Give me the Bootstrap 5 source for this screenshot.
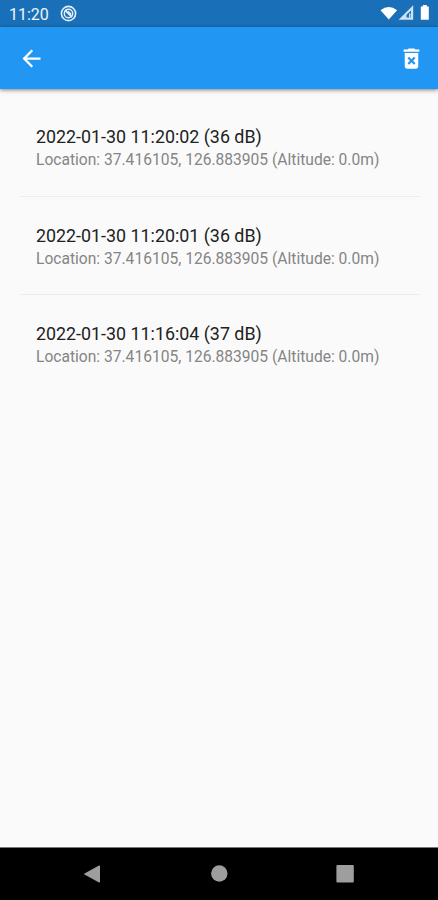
<!DOCTYPE html>
<html lang="en">
<head>
<meta charset="utf-8">
<meta name="viewport" content="width=device-width, initial-scale=1">
<title>Records</title>
<link href="https://cdn.jsdelivr.net/npm/bootstrap@5.3.0/dist/css/bootstrap.min.css" rel="stylesheet">
<style>
body { font-family: Roboto, "Liberation Sans", sans-serif; background: #fafafa; height: 900px; overflow: hidden; }
svg { display: block; flex: none; }
.status-bar { height: 27px; background: #1a70b8; color: #eef5fb; font-size: 16px; line-height: 27px; padding: 1px 7px 0 9px; }
.app-bar { height: 62px; background: #2196f3; padding: 0 13px 0 18px; box-shadow: 0 1px 4px rgba(0,0,0,.5); }
.records { padding: 8px 18px 0 20px; }
.record { height: 98px; padding: 27px 16px 0; border-bottom: 1px solid #ededed; }
.record:first-child { height: 100px; padding-top: 28px; }
.record:last-child { border-bottom: 0; }
.record-title { font-size: 17.85px; line-height: 23px; color: #212121; }
.record-place { font-size: 15.6px; line-height: 25px; color: #858585; }
.system-nav { height: 53px; background: #000; border-top: 1px solid #777; }
.system-nav svg { width: 126px; }
</style>
<script src="https://cdn.jsdelivr.net/npm/bootstrap@5.3.0/dist/js/bootstrap.bundle.min.js"></script>
</head>
<body class="d-flex flex-column m-0">
<div class="status-bar d-flex align-items-center flex-shrink-0">
  <span>11:20</span>
  <svg class="ms-2 me-auto" width="24" height="20" viewBox="0 0 24 20" fill="none" stroke="#e3eef8">
    <circle cx="11.500" cy="9.5" r="7.1" stroke-width="1.6"/>
    <circle cx="11.500" cy="9.5" r="4.2" stroke-width="1.4"/>
    <path d="M8 6l7 7" stroke-width="1.8"/>
    <path d="M11 7.2l3.2 3.1" stroke-width="1.2"/>
  </svg>
  <svg width="52" height="20" viewBox="0 0 52 20" fill="#fff">
    <path d="M1.500 6.2Q9.800 -.3 18.100 6.2L9.800 15.600z"/>
    <path d="M34.2 1.200V15.800H19.600z" fill="#cfe2f2"/>
    <path d="M32 6.500V13.500H27.500V10.700z" fill="#1a70b8"/>
    <path d="M30 9.500h1.500v4H30z" fill="#cfe2f2"/>
    <path d="M41.800 2.6h2V1h4v1.600h2V15.800h-8z"/>
  </svg>
</div>
<header class="app-bar d-flex align-items-center justify-content-between flex-shrink-0">
  <svg width="27" height="27" viewBox="0 0 24 24" fill="#fff"><path d="M20 11H7.830l5.590-5.590L12 4l-8 8 8 8 1.410-1.410L7.830 13H20v-2z"/></svg>
  <svg width="27" height="27" viewBox="0 0 24 24" fill="#fff"><path fill-rule="evenodd" d="M6 19c0 1.100.9 2 2 2h8c1.100 0 2-.9 2-2V7H6v12zm2.460-7.120 1.410-1.410L12 12.590l2.120-2.120 1.410 1.410L13.410 14l2.120 2.120-1.410 1.410L12 15.410l-2.120 2.120-1.410-1.410L10.590 14l-2.130-2.120zM15.500 4l-1-1h-5l-1 1H5v2h14V4z"/></svg>
</header>
<main class="records flex-grow-1">
  <article class="record"><div class="record-title">2022-01-30 11:20:02 (36 dB)</div><div class="record-place">Location: 37.416105, 126.883905 (Altitude: 0.0m)</div></article>
  <article class="record"><div class="record-title">2022-01-30 11:20:01 (36 dB)</div><div class="record-place">Location: 37.416105, 126.883905 (Altitude: 0.0m)</div></article>
  <article class="record"><div class="record-title">2022-01-30 11:16:04 (37 dB)</div><div class="record-place">Location: 37.416105, 126.883905 (Altitude: 0.0m)</div></article>
</main>
<nav class="system-nav d-flex justify-content-center align-items-center flex-shrink-0">
  <svg height="24" viewBox="0 0 126 24" fill="#9e9e9e"><path d="M54.500 11.500q-1 .5 0 1L69 20.500q1 .3 1-.7V4.200q0-1-1-.7z"/></svg>
  <svg height="24" viewBox="0 0 126 24" fill="#9e9e9e"><circle cx="63.300" cy="11.500" r="8.200"/></svg>
  <svg height="24" viewBox="0 0 126 24" fill="#9e9e9e"><rect x="54.400" y="3" width="17.400" height="17.400" rx="1"/></svg>
</nav>
</body>
</html>
